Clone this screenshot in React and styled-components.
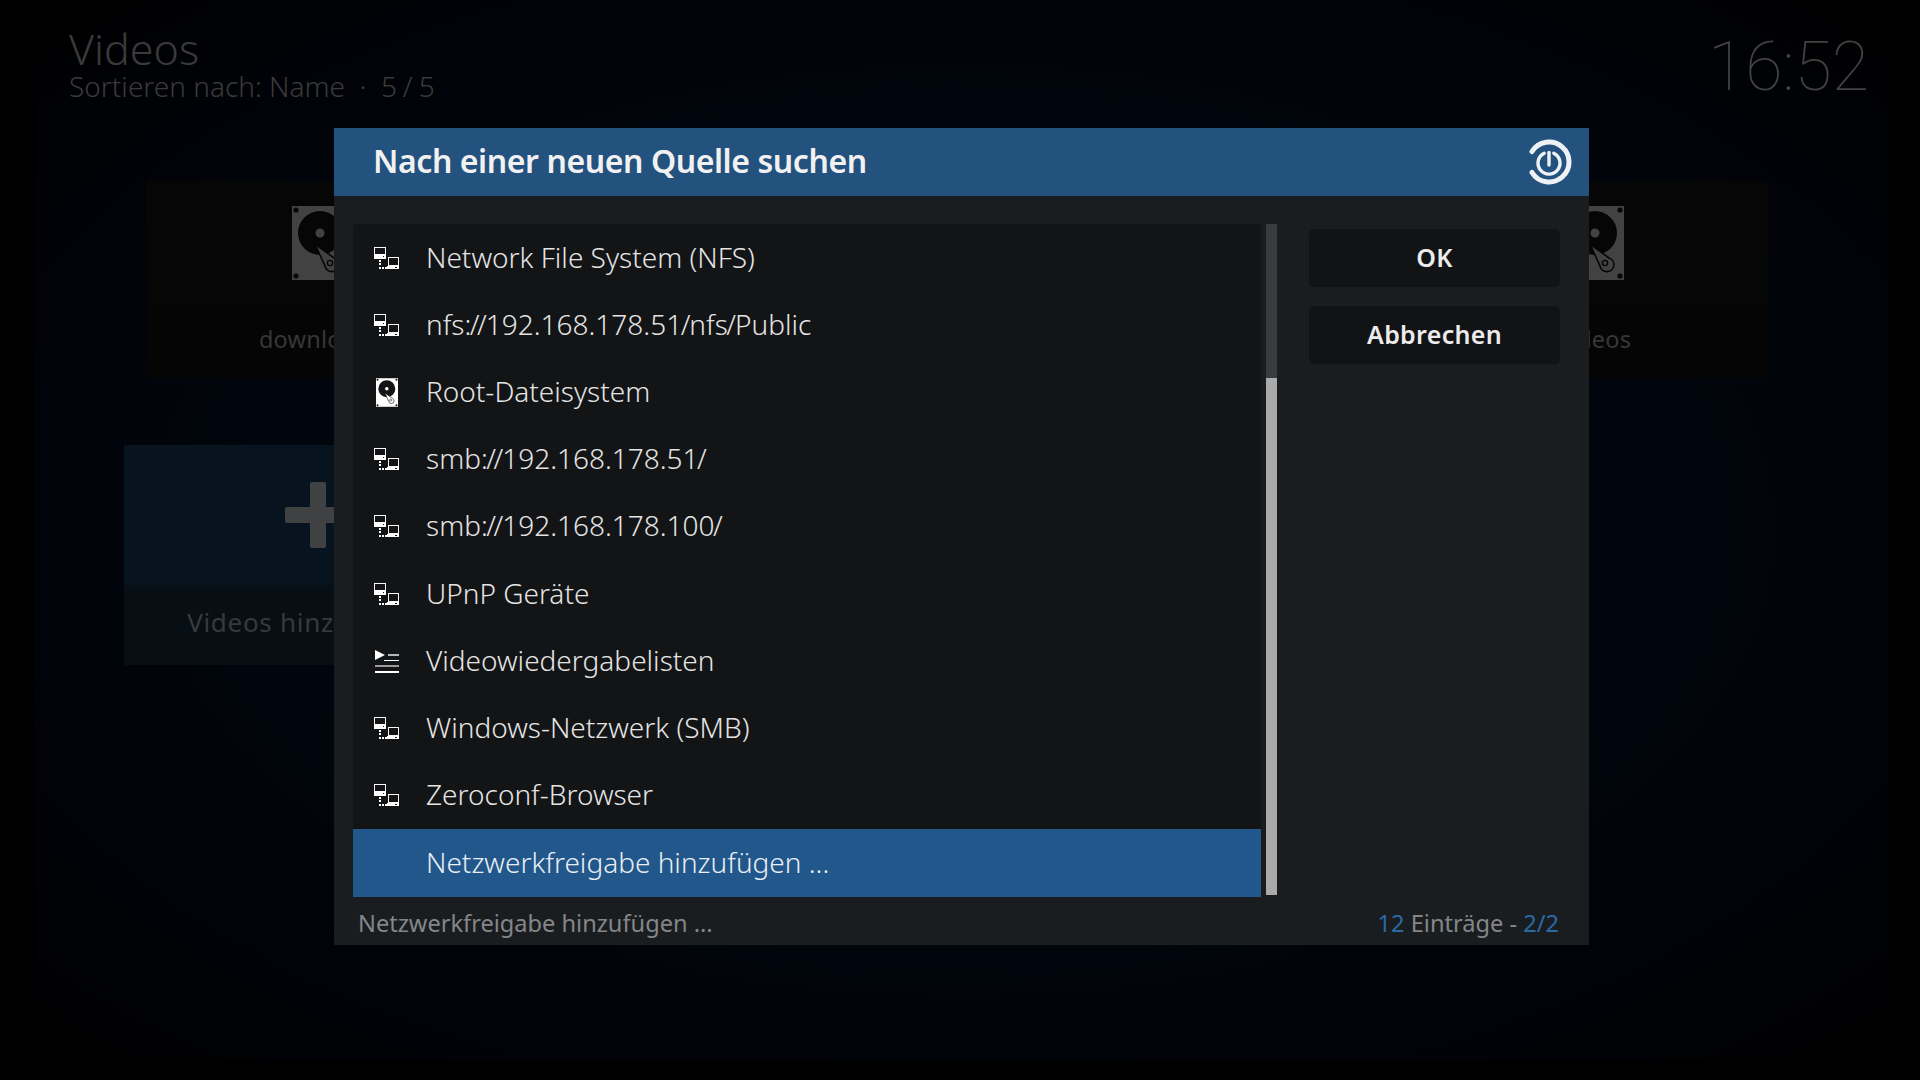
import styled, { createGlobalStyle } from "styled-components";

const GlobalStyle = createGlobalStyle`
  html, body {
    margin: 0;
    padding: 0;
    background: #000;
  }
  body {
    font-family: "Noto Sans", "Open Sans", sans-serif;
  }
`;

const Page = styled.div`
  position: relative;
  width: 1920px;
  height: 1080px;
  overflow: hidden;
  background: #000;
`;

const Backdrop = styled.div`
  width: 1853px;
  height: 1060px;
  margin-left: 35px;
  box-sizing: border-box;
  padding: 26px 21px 0 34px;
  background: radial-gradient(ellipse at 50% 50%, #020c16 0%, #01060e 45%, #010309 75%, #000 100%);
`;

const TopBar = styled.header`
  display: flex;
  justify-content: space-between;
  align-items: flex-start;
  height: 155px;
`;

const PageTitle = styled.h1`
  margin: 0;
  font-size: 43px;
  line-height: 46px;
  font-weight: 300;
  color: #3a3a3a;
`;

const PageSub = styled.div`
  font-size: 28px;
  line-height: 29px;
  font-weight: 300;
  color: #3a3a3a;
  white-space: pre;
`;

const Clock = styled.div`
  font-family: "Roboto", sans-serif;
  font-weight: 100;
  font-size: 68px;
  line-height: 78px;
  color: #424242;
  margin: 2px -2px 0 0;
`;

const TileRow = styled.div`
  display: flex;
  justify-content: space-between;
  margin-left: 78px;
  margin-right: 99px;
`;

const Tile = styled.div`
  width: 346px;
  height: 197px;
  background: #050505;
`;

const TileArt = styled.div`
  height: 124px;
  display: flex;
  align-items: center;
  justify-content: center;
  background: #060606;
`;

const TileLabel = styled.div`
  height: 73px;
  box-sizing: border-box;
  padding-bottom: 6px;
  display: flex;
  align-items: center;
  justify-content: center;
  font-size: 23.5px;
  color: #373737;
  letter-spacing: 0.2px;
`;

const AddTile = styled.div`
  width: 388px;
  height: 220px;
  margin: 67px 0 0 55px;
  background: #070e14;
`;

const AddArt = styled.div`
  height: 140px;
  display: flex;
  align-items: center;
  justify-content: center;
  background: #07141f;
`;

const AddLabel = styled.div`
  height: 80px;
  box-sizing: border-box;
  padding-bottom: 7px;
  display: flex;
  align-items: center;
  justify-content: center;
  font-size: 26px;
  color: #373a3c;
  letter-spacing: 0.7px;
`;

const Dialog = styled.section`
  position: absolute;
  left: 334px;
  top: 128px;
  width: 1255px;
  height: 817px;
  display: flex;
  flex-direction: column;
  background: #1a1d20;
`;

const DialogHeader = styled.div`
  height: 68px;
  flex: none;
  display: flex;
  align-items: center;
  justify-content: space-between;
  padding: 0 17px 0 39px;
  background: #24527f;
`;

const DialogTitle = styled.h2`
  margin: 0 0 4px;
  font-size: 32px;
  font-weight: 600;
  letter-spacing: -0.42px;
  color: #f1f1f1;
`;

const DialogBody = styled.div`
  display: flex;
  padding: 28px 29px 0 19px;
`;

const List = styled.ul`
  list-style: none;
  margin: 0;
  padding: 0;
  width: 908px;
  height: 673px;
  background: #131416;
  border-radius: 4px 4px 0 0;
`;

const Row = styled.li`
  height: ${(p) => (p.$active ? "68px" : "67.2px")};
  box-sizing: border-box;
  display: flex;
  align-items: center;
  padding: 0 0 2px 21px;
  font-size: 28px;
  font-weight: 300;
  color: ${(p) => (p.$active ? "#e8eef4" : "#e4e4e4")};
  background: ${(p) => (p.$active ? "#21578a" : "transparent")};
`;

const IconSlot = styled.span`
  width: 26px;
  margin-right: 26px;
  padding-top: 3px;
  display: flex;
  justify-content: center;
  flex: none;
`;

// the slash in the reference's font is narrower than the installed one
const Slash = styled.span`
  margin-left: -1.5px;
  letter-spacing: -1px;
`;

const Scrollbar = styled.div`
  width: 11px;
  height: 671px;
  margin-left: 5px;
  flex: none;
  display: flex;
  flex-direction: column;
  background: #3a3d3f;
`;

const ScrollThumb = styled.div`
  margin-top: 154px;
  flex: 1;
  background: #aaaaaa;
`;

const Side = styled.div`
  width: 251px;
  margin-left: 32px;
  padding-top: 5px;
  display: flex;
  flex-direction: column;
  gap: 19px;
`;

const SideButton = styled.button`
  height: 58px;
  border: 0;
  border-radius: 5px;
  background: #121315;
  color: #ececec;
  font-family: inherit;
  font-size: 25px;
  font-weight: 600;
  letter-spacing: 0.3px;
  padding: 0 0 3px;
`;

const DialogFooter = styled.div`
  flex: 1;
  display: flex;
  align-items: center;
  justify-content: space-between;
  padding: 4px 30px 0 24px;
  font-size: 23.6px;
  color: #848688;
`;

const Accent = styled.span`
  color: #2a69a6;
`;

function NetworkIcon() {
  return (
    <svg width="27" height="23" viewBox="0 0 27 23" shapeRendering="crispEdges">
      <rect x="0.5" y="0.5" width="11" height="7" fill="none" stroke="#fff" />
      <rect x="0" y="7" width="12" height="5" fill="#fff" />
      <rect x="9" y="9" width="1" height="1" fill="#131416" />
      <rect x="5" y="13" width="2" height="2" fill="#fff" />
      <rect x="5" y="16" width="2" height="2" fill="#fff" />
      <rect x="5" y="20" width="2" height="2" fill="#fff" />
      <rect x="8" y="20" width="2" height="2" fill="#fff" />
      <rect x="11" y="20" width="2" height="2" fill="#fff" />
      <rect x="15.5" y="10.5" width="10" height="8" fill="none" stroke="#fff" />
      <rect x="14" y="19" width="12" height="3" fill="#fff" />
      <rect x="22" y="20" width="2" height="1" fill="#131416" />
    </svg>
  );
}

function DiskIcon({ width, height, body, hole }) {
  return (
    <svg width={width} height={height} viewBox="0 0 57 74">
      <rect width="57" height="74" fill={body} />
      <circle cx="4" cy="4" r="2.6" fill={hole} />
      <circle cx="53" cy="4" r="2.6" fill={hole} />
      <circle cx="4" cy="70" r="2.6" fill={hole} />
      <circle cx="53" cy="70" r="2.6" fill={hole} />
      <circle cx="28" cy="27" r="22" fill={hole} />
      <circle cx="28" cy="27" r="4.5" fill={body} />
      <path d="M23 38 L42 52 A7 7 0 1 1 33 60 Z" fill={body} stroke={hole} strokeWidth="1.6" />
      <circle cx="38" cy="57" r="2.6" fill="none" stroke={hole} strokeWidth="1.4" />
    </svg>
  );
}

function PlaylistIcon() {
  return (
    <svg width="24" height="23" viewBox="0 0 24 23" shapeRendering="crispEdges">
      <path d="M0 0 L10 5 L0 10 Z" fill="#fff" shapeRendering="auto" />
      <rect x="13" y="4" width="11" height="2" fill="#b5b5b5" />
      <rect x="9" y="10" width="15" height="1" fill="#fff" />
      <rect x="0" y="15" width="24" height="2" fill="#9c9c9c" />
      <rect x="0" y="21" width="24" height="2" fill="#fff" />
    </svg>
  );
}

function PowerIcon() {
  return (
    <svg width="46" height="46" viewBox="-23 -23 46 46" fill="none" stroke="#eef2f6" strokeLinecap="round">
      <path d="M-17 -10.5 A20 20 0 1 1 -17 10.5" strokeWidth="5" />
      <path d="M-4.8 -8.8 A11 11 0 1 0 4.8 -8.8" strokeWidth="3.4" />
      <path d="M0 -9.5 L0 3" strokeWidth="3.4" />
    </svg>
  );
}

function PlusIcon() {
  return (
    <svg width="66" height="66" viewBox="0 0 66 66">
      <rect x="25" y="0" width="16" height="66" rx="2" fill="#404142" />
      <rect x="0" y="25" width="66" height="16" rx="2" fill="#404142" />
    </svg>
  );
}

const entries = [
  { label: "Network File System (NFS)", icon: "net" },
  { label: "nfs://192.168.178.51/nfs/Public", icon: "net" },
  { label: "Root-Dateisystem", icon: "disk" },
  { label: "smb://192.168.178.51/", icon: "net" },
  { label: "smb://192.168.178.100/", icon: "net" },
  { label: "UPnP Geräte", icon: "net" },
  { label: "Videowiedergabelisten", icon: "list" },
  { label: "Windows-Netzwerk (SMB)", icon: "net" },
  { label: "Zeroconf-Browser", icon: "net" },
  { label: "Netzwerkfreigabe hinzufügen ...", active: true },
];

function EntryIcon({ type }) {
  if (type === "net") return <NetworkIcon />;
  if (type === "disk") return <DiskIcon width={22} height={29} body="#fff" hole="#131416" />;
  if (type === "list") return <PlaylistIcon />;
  return null;
}

function EntryLabel({ text }) {
  const parts = text.split("/");
  return (
    <span>
      {parts.map((part, i) => (
        <span key={i}>
          {part}
          {i < parts.length - 1 && <Slash>/</Slash>}
        </span>
      ))}
    </span>
  );
}

export default function App() {
  return (
    <Page>
      <GlobalStyle />
      <Backdrop>
        <TopBar>
          <div>
            <PageTitle>Videos</PageTitle>
            <PageSub>
              <EntryLabel text="Sortieren nach: Name  ·  5 / 5" />
            </PageSub>
          </div>
          <Clock>16:52</Clock>
        </TopBar>
        <TileRow>
          <Tile>
            <TileArt>
              <DiskIcon width={57} height={74} body="#424242" hole="#060606" />
            </TileArt>
            <TileLabel>downloads</TileLabel>
          </Tile>
          <Tile>
            <TileArt>
              <DiskIcon width={57} height={74} body="#424242" hole="#060606" />
            </TileArt>
            <TileLabel>videos</TileLabel>
          </Tile>
        </TileRow>
        <AddTile>
          <AddArt>
            <PlusIcon />
          </AddArt>
          <AddLabel>Videos hinzufügen...</AddLabel>
        </AddTile>
      </Backdrop>
      <Dialog>
        <DialogHeader>
          <DialogTitle>Nach einer neuen Quelle suchen</DialogTitle>
          <PowerIcon />
        </DialogHeader>
        <DialogBody>
          <List>
            {entries.map((entry) => (
              <Row key={entry.label} $active={entry.active}>
                <IconSlot>
                  <EntryIcon type={entry.icon} />
                </IconSlot>
                <EntryLabel text={entry.label} />
              </Row>
            ))}
          </List>
          <Scrollbar>
            <ScrollThumb />
          </Scrollbar>
          <Side>
            <SideButton>OK</SideButton>
            <SideButton>Abbrechen</SideButton>
          </Side>
        </DialogBody>
        <DialogFooter>
          <span>Netzwerkfreigabe hinzufügen ...</span>
          <span>
            <Accent>12</Accent> Einträge - <Accent>2/2</Accent>
          </span>
        </DialogFooter>
      </Dialog>
    </Page>
  );
}
